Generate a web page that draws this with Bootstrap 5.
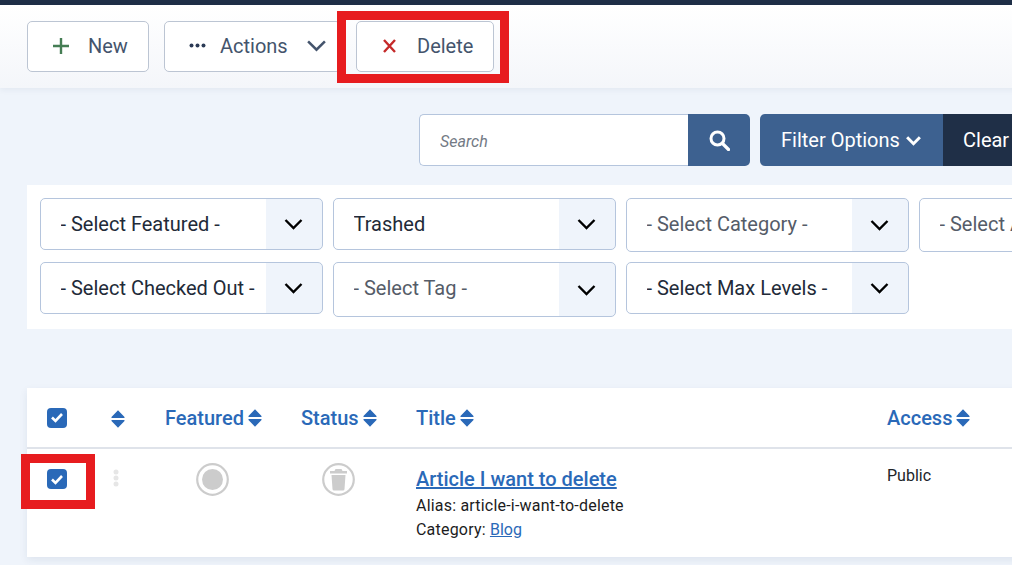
<!DOCTYPE html>
<html lang="en">
<head>
  <meta charset="UTF-8" />
  <meta name="viewport" content="width=device-width, initial-scale=1.0"/>
  <title>Articles: Trashed</title>
  <link href="https://cdn.jsdelivr.net/npm/bootstrap@5.3.2/dist/css/bootstrap.min.css" rel="stylesheet" />
  <style>
    html, body { overflow: hidden; }
    body {
      background: #eff4fb;
      font-family: Roboto, "Liberation Sans", sans-serif;
      color: #1c1c22;
    }

    .page-wrap { position: relative; width: 1200px; height: 565px; border-top: 5px solid #1f2f47; }

    /* toolbar */
    .top-tools {
      height: 83px;
      padding: 16px 0 0 27px;
      gap: 15px;
      background: linear-gradient(to bottom, #fff, #f4f6fa);
      box-shadow: 0 2px 6px rgba(30, 50, 90, .06);
    }
    .tool-btn {
      height: 51px;
      background: #fff;
      border: 1px solid #bcc5d3;
      border-radius: 5px;
      font-size: 20px;
      color: #44546c;
      padding: 0 0 2px;
    }
    .tool-btn svg { flex: none; }
    .tool-new { width: 122px; padding-left: 24px; gap: 18px; }
    .tool-actions { width: 177px; padding-left: 24px; gap: 14px; }
    .tool-delete { width: 138px; padding-left: 25px; gap: 20px; }

    /* search row */
    .search-row { margin: 26px 0 0 419px; gap: 10px; height: 52px; }
    .search-box { width: 331px; }
    .search-box input {
      height: 52px;
      border: 1px solid #b5c5dd;
      border-right: 0;
      border-radius: 5px 0 0 5px;
      padding: 2px 0 0 20px;
      font-size: 16px;
      font-style: italic;
    }
    .search-box input::placeholder { color: #737a85; }
    .search-go { width: 62px; background: #3d6190; border-radius: 0 5px 5px 0; }
    .filter-btn {
      background: #3d6190;
      color: #fff;
      font-size: 20px;
      width: 183px;
      height: 52px;
      border-radius: 5px 0 0 5px;
      padding-left: 21px;
      gap: 5px;
    }
    .clear-btn {
      background: #1f2f47;
      color: #fff;
      font-size: 20px;
      width: 100px;
      height: 52px;
      padding-left: 20px;
    }

    /* filters */
    .filter-panel {
      margin: 19px 0 0 27px;
      height: 144px;
      padding: 13px;
      background: #fff;
    }
    .filter-line { display: flex; gap: 10px; align-items: flex-start; }
    .filter-line + .filter-line { margin-top: 10px; }
    .fsel {
      width: 283px;
      flex: none;
      height: 52px;
      padding: 0 60px 0 19.500px;
      font-size: 20px;
      color: #222a38;
      border: 1px solid #b5c5dd;
      border-radius: 5px;
      background-color: #fff;
      background-image:
        url("data:image/svg+xml,%3Csvg xmlns='http://www.w3.org/2000/svg' viewBox='0 0 20 12'%3E%3Cpath d='M2 2l8 8 8-8' fill='none' stroke='%23000' stroke-width='2.4'/%3E%3C/svg%3E"),
        linear-gradient(#eff4fb, #eff4fb);
      background-repeat: no-repeat;
      background-position: right 18px center, right 0 center;
      background-size: 21px 12px, 56px 100%;
    }
    .fsel-muted { color: #555c68; }
    .fsel-tall { height: 54px; padding-bottom: 3px; }
    .fsel-taller { height: 55px; padding-bottom: 4px; }

    /* articles */
    .list-panel {
      margin: 59px 0 0 27px;
      background: #fff;
      box-shadow: 0 3px 8px rgba(30, 50, 90, .08);
    }
    .list-panel table { table-layout: fixed; width: 1173px; margin: 0; }
    .list-panel th {
      height: 60px;
      padding: 0;
      vertical-align: middle;
      border-bottom: 2px solid #dfe3ea;
      font-size: 20px;
      font-weight: 500;
      color: #2a69b8;
      white-space: nowrap;
    }
    .list-panel td { height: 109px; padding: 0; vertical-align: top; border: 0; font-size: 16px; }
    .col-chk { width: 84px; }
    .col-sort { width: 54px; }
    .col-feat { width: 136px; }
    .col-stat { width: 115px; }
    .col-title { width: 471px; }
    .sort-ic { margin-left: 4px; vertical-align: -2px; }
    .fake-check {
      display: flex;
      width: 20px;
      height: 20px;
      margin-left: 20px;
      align-items: center;
      justify-content: center;
      background: #2a69b8;
      border-radius: 4px;
    }
    .row-check { margin-top: 20px; }
    .drag-dots { display: block; margin: 20px 0 0 2px; }
    .state-ic { display: block; width: 33px; height: 33px; margin-top: 14px; }
    .state-feat { margin-left: 31px; }
    .state-trash { margin-left: 21px; }
    .title-cell { padding-top: 18px; }
    .access-cell { padding-top: 15px; }
    .art-link { font-size: 20px; font-weight: 500; color: #2a69b8; line-height: 24px; }
    .art-meta { font-size: 16px; line-height: 24px; color: #1c1c22; letter-spacing: .2px; }
    .art-meta:first-of-type { margin-top: 1px; }
    .art-meta a { color: #2a69b8; letter-spacing: 0; }

    /* red annotation boxes */
    .note-box { position: absolute; border: 9px solid #e71c1f; pointer-events: none; }
    .note-delete { left: 337px; top: 6px; width: 172px; height: 72px; }
    .note-check { left: 21px; top: 449px; width: 74px; height: 55px; }
  </style>
</head>
<body>
  <div class="page-wrap">

    <!-- Toolbar -->
    <div class="top-tools d-flex align-items-start">
      <button class="tool-btn tool-new d-flex align-items-center">
        <svg width="18" height="18" viewBox="0 0 18 18"><path d="M9 1v16M1 9h16" stroke="#457d54" stroke-width="2.400" fill="none"/></svg>
        New
      </button>
      <button class="tool-btn tool-actions d-flex align-items-center">
        <svg width="17" height="5" viewBox="0 0 17 5" fill="#2b3a55"><circle cx="2.500" cy="2.500" r="2"/><circle cx="8.500" cy="2.500" r="2"/><circle cx="14.500" cy="2.500" r="2"/></svg>
        Actions
        <svg class="ms-1" width="21" height="13" viewBox="0 0 20 12"><path d="M2 2l8 8 8-8" stroke="#44546c" stroke-width="2.400" fill="none"/></svg>
      </button>
      <button class="tool-btn tool-delete d-flex align-items-center">
        <svg width="15" height="14" viewBox="0 0 15 14"><path d="M2 1l11 12M13 1L2 13" stroke="#c52a2a" stroke-width="2.400" fill="none"/></svg>
        Delete
      </button>
    </div>

    <!-- Search -->
    <div class="search-row d-flex">
      <div class="search-box d-flex">
        <input class="form-control shadow-none" type="text" placeholder="Search" />
        <button class="search-go btn p-0 border-0 flex-shrink-0" aria-label="Search">
          <svg width="21" height="21" viewBox="0 0 21 21"><circle cx="8.500" cy="8.500" r="6.500" stroke="#fff" stroke-width="3" fill="none"/><path d="M13.500 13.500l6 6" stroke="#fff" stroke-width="3.200" stroke-linecap="round"/></svg>
        </button>
      </div>
      <div class="d-flex">
        <button class="filter-btn btn border-0 d-flex align-items-center">
          Filter Options
          <svg width="17" height="11" viewBox="0 0 16 10"><path d="M2 2l6 6 6-6" stroke="#fff" stroke-width="2.800" fill="none"/></svg>
        </button>
        <button class="clear-btn btn border-0 rounded-0 text-start">Clear</button>
      </div>
    </div>

    <!-- Filters -->
    <div class="filter-panel">
      <div class="filter-line">
        <select class="fsel form-select shadow-none"><option>- Select Featured -</option></select>
        <select class="fsel form-select shadow-none"><option>Trashed</option></select>
        <select class="fsel fsel-muted fsel-tall form-select shadow-none"><option>- Select Category -</option></select>
        <select class="fsel fsel-muted fsel-tall form-select shadow-none"><option>- Select Access -</option></select>
      </div>
      <div class="filter-line">
        <select class="fsel form-select shadow-none"><option>- Select Checked Out -</option></select>
        <select class="fsel fsel-muted fsel-taller form-select shadow-none"><option>- Select Tag -</option></select>
        <select class="fsel form-select shadow-none"><option>- Select Max Levels -</option></select>
      </div>
    </div>

    <!-- Articles -->
    <div class="list-panel">
      <table class="table">
        <thead>
          <tr>
            <th class="col-chk"><span class="fake-check"><svg width="14" height="11" viewBox="0 0 14 11"><path d="M2 5.500l3.500 3.500 6.500-7" stroke="#fff" stroke-width="2.600" fill="none"/></svg></span></th>
            <th class="col-sort"><svg width="14" height="18" viewBox="0 0 14 18" fill="#2a69b8"><path d="M7 0.200l6.500 6.800a.6.6 0 0 1-.4 1H.9a.6.6 0 0 1-.4-1zM7 17.800l6.500-6.800a.6.6 0 0 0-.4-1H.9a.6.6 0 0 0-.4 1z"/></svg></th>
            <th class="col-feat">Featured<svg class="sort-ic" width="14" height="18" viewBox="0 0 14 18" fill="#2a69b8"><path d="M7 0.200l6.500 6.800a.6.6 0 0 1-.4 1H.9a.6.6 0 0 1-.4-1zM7 17.800l6.500-6.800a.6.6 0 0 0-.4-1H.9a.6.6 0 0 0-.4 1z"/></svg></th>
            <th class="col-stat">Status<svg class="sort-ic" width="14" height="18" viewBox="0 0 14 18" fill="#2a69b8"><path d="M7 0.200l6.500 6.800a.6.6 0 0 1-.4 1H.9a.6.6 0 0 1-.4-1zM7 17.800l6.500-6.800a.6.6 0 0 0-.4-1H.9a.6.6 0 0 0-.4 1z"/></svg></th>
            <th class="col-title">Title<svg class="sort-ic" width="14" height="18" viewBox="0 0 14 18" fill="#2a69b8"><path d="M7 0.200l6.500 6.800a.6.6 0 0 1-.4 1H.9a.6.6 0 0 1-.4-1zM7 17.800l6.500-6.800a.6.6 0 0 0-.4-1H.9a.6.6 0 0 0-.4 1z"/></svg></th>
            <th>Access<svg class="sort-ic" width="14" height="18" viewBox="0 0 14 18" fill="#2a69b8"><path d="M7 0.200l6.500 6.800a.6.6 0 0 1-.4 1H.9a.6.6 0 0 1-.4-1zM7 17.800l6.500-6.800a.6.6 0 0 0-.4-1H.9a.6.6 0 0 0-.4 1z"/></svg></th>
          </tr>
        </thead>
        <tbody>
          <tr>
            <td><span class="fake-check row-check"><svg width="14" height="11" viewBox="0 0 14 11"><path d="M2 5.500l3.500 3.500 6.500-7" stroke="#fff" stroke-width="2.600" fill="none"/></svg></span></td>
            <td><svg class="drag-dots" width="6" height="18" viewBox="0 0 6 18" fill="#e6e6e6"><circle cx="3" cy="3" r="2.500"/><circle cx="3" cy="9" r="2.500"/><circle cx="3" cy="15" r="2.500"/></svg></td>
            <td><svg class="state-ic state-feat" viewBox="0 0 33 33"><circle cx="16.500" cy="16.500" r="15.300" fill="none" stroke="#ccc" stroke-width="2.200"/><circle cx="16.500" cy="16.500" r="10.500" fill="#ccc"/></svg></td>
            <td><svg class="state-ic state-trash" viewBox="0 0 33 33"><circle cx="16.500" cy="16.500" r="15.300" fill="none" stroke="#ccc" stroke-width="2.200"/><path d="M8 8h17v2.500H8zM13.500 6h6l1 2h-8zM9.500 12h14l-1 14a1.500 1.500 0 0 1-1.500 1.500H12a1.500 1.500 0 0 1-1.500-1.500z" fill="#ccc"/></svg></td>
            <td>
              <div class="title-cell">
                <a class="art-link" href="#">Article I want to delete</a>
                <div class="art-meta">Alias: article-i-want-to-delete</div>
                <div class="art-meta">Category: <a href="#">Blog</a></div>
              </div>
            </td>
            <td><div class="access-cell">Public</div></td>
          </tr>
        </tbody>
      </table>
    </div>

    <div class="note-box note-delete"></div>
    <div class="note-box note-check"></div>
  </div>
</body>
</html>
